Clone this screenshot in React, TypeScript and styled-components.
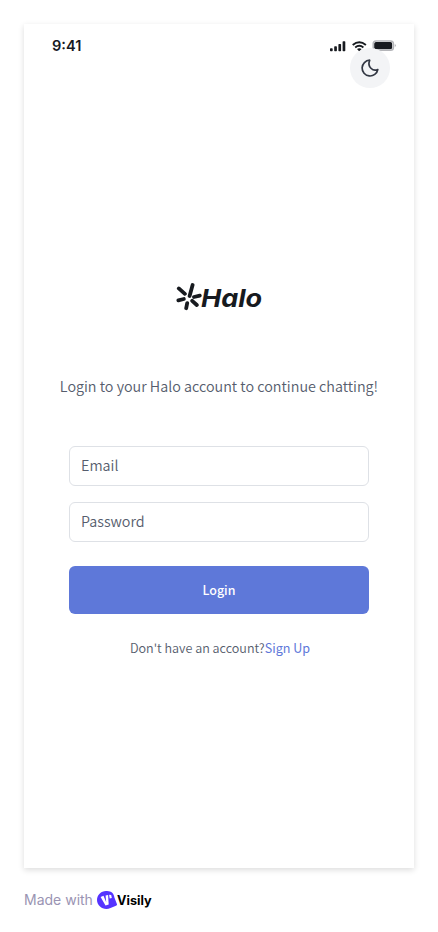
import React from "react";
import styled, { createGlobalStyle } from "styled-components";

const GlobalStyle = createGlobalStyle`
  * { box-sizing: border-box; }
  body { margin: 0; background: #fff; font-family: "Noto Sans CJK SC", "Noto Sans", sans-serif; }
`;

const Page = styled.div`
  width: 438px;
  height: 932px;
  padding: 24px 24px 0;
  overflow: hidden;
`;

const Screen = styled.main`
  display: flex;
  flex-direction: column;
  width: 390px;
  height: 844px;
  background: #fff;
  box-shadow: 0 2px 6px rgba(0, 0, 0, 0.14);
`;

const StatusBar = styled.div`
  display: flex;
  align-items: center;
  justify-content: space-between;
  height: 24px;
  padding: 20px 17px 0 28px;
`;

const Time = styled.span`
  font: 600 14.6px/20px Inter, sans-serif;
  color: #171a1f;
`;

const Indicators = styled.svg`
  display: block;
  width: 68px;
  height: 14px;
`;

const ThemeButton = styled.button`
  display: grid;
  place-items: center;
  align-self: flex-end;
  width: 40px;
  height: 40px;
  margin-right: 24px;
  padding: 0;
  border: 0;
  border-radius: 50%;
  background: #f3f4f6;
`;

const Brand = styled.div`
  display: flex;
  justify-content: center;
  height: 32px;
  margin-top: 192px;
`;

const BrandMark = styled.svg`
  display: block;
  width: 26px;
  height: 32px;
`;

const BrandName = styled.span`
  width: 61px;
  margin-left: -0.5px;
  font: italic 700 24.8px/36px Inter, sans-serif;
  color: #171a1f;
  white-space: nowrap;
  transform: scaleX(1.09);
  transform-origin: left;
`;

const Intro = styled.p`
  margin: 60px 0 0;
  font-size: 14.35px;
  font-weight: 350;
  line-height: 27px;
  color: #565d6d;
  text-align: center;
  white-space: nowrap;
`;

const Form = styled.form`
  display: flex;
  flex-direction: column;
  width: 300px;
  margin: 47px auto 0 45px;
`;

const Field = styled.input`
  height: 40px;
  margin-bottom: 16px;
  padding: 0 11px 3px;
  border: 1px solid #dee1e6;
  border-radius: 6px;
  background: #fff;
  font: 350 14.35px/26px "Noto Sans CJK SC", sans-serif;
  outline: none;
  &::placeholder { color: #565d6d; opacity: 1; }
`;

const Submit = styled.button`
  height: 48px;
  margin-top: 8px;
  border: 0;
  border-radius: 6px;
  background: #5e78d9;
  color: #fff;
  font: 500 12.44px/22px "Noto Sans CJK SC", sans-serif;
`;

const SignUp = styled.p`
  display: flex;
  justify-content: center;
  margin: 23px 0 0 2px;
  font-size: 12.58px;
  font-weight: 350;
  line-height: 22px;
  color: #565d6d;
`;

const SignUpLink = styled.a`
  color: #5e78d9;
  font-weight: 400;
`;

const Footer = styled.footer`
  display: flex;
  align-items: center;
  height: 20px;
  margin-top: 22px;
  font: 400 14px/20px Inter, sans-serif;
  color: #9a94b3;
`;

const MadeWith = styled.span`
  width: 72px;
  white-space: nowrap;
`;

const VisilyMark = styled.svg`
  display: block;
  width: 22px;
  height: 20px;
`;

const VisilyName = styled.span`
  margin-left: -1px;
  padding-top: 1px;
  font: 700 12.7px/20px Inter, sans-serif;
  color: #000;
`;

const StatusIcons = () => (
  <Indicators viewBox="0 0 68 14" aria-hidden="true">
    <g fill="#171a1f">
      <rect x="1" y="9.3" width="2.7" height="3" rx="0.7" />
      <rect x="5.2" y="7.3" width="2.7" height="5" rx="0.7" />
      <rect x="9.4" y="5" width="2.7" height="7.3" rx="0.7" />
      <rect x="13.6" y="2.2" width="2.7" height="10.1" rx="0.7" />
      <rect x="45.2" y="3" width="18" height="7.2" rx="1.8" />
    </g>
    <path d="M23.7 5.9Q30.3 .4 36.9 5.9M26.2 8.4Q30.3 5 34.4 8.4" fill="none" stroke="#171a1f" strokeWidth="1.9" />
    <path d="M28 10.1Q30.3 8.2 32.6 10.1L30.3 12.5Z" fill="#171a1f" />
    <rect x="44.2" y="1.9" width="20.2" height="9.4" rx="2.8" fill="none" stroke="#b4b5b9" strokeWidth="1.5" />
    <path d="M65.8 5.1Q67.8 6.6 65.8 8.1Z" fill="#a5a6a9" />
  </Indicators>
);

const App = () => (
  <>
    <GlobalStyle />
    <Page>
      <Screen>
        <StatusBar>
          <Time>9:41</Time>
          <StatusIcons />
        </StatusBar>
        <ThemeButton aria-label="Dark mode">
          <svg width="20" height="20" viewBox="0 0 20 20" fill="none" stroke="#323743" strokeWidth="1.7" strokeLinejoin="round">
            <path d="M9.7 2.2A7.9 7.9 0 1 0 17.8 11.5C13 13.8 7 9 9.7 2.2Z" />
          </svg>
        </ThemeButton>
        <Brand>
          <BrandMark viewBox="0 0 26 32" fill="none" stroke="#171a1f" strokeWidth="3.8" strokeLinecap="round">
            <path d="M16.6 5L13.6 16M2.8 8.4L8.9 13.8M2.4 20.4L7.8 19M11.2 23.2L10.2 28.2M16.2 20.8L20.8 25M18 17L23.8 15.6" />
          </BrandMark>
          <BrandName>Halo</BrandName>
        </Brand>
        <Intro>Login to your Halo account to continue chatting!</Intro>
        <Form>
          <Field type="email" placeholder="Email" />
          <Field type="password" placeholder="Password" />
          <Submit type="button">Login</Submit>
          <SignUp>
            Don't have an account?<SignUpLink>Sign Up</SignUpLink>
          </SignUp>
        </Form>
      </Screen>
      <Footer>
        <MadeWith>Made with</MadeWith>
        <VisilyMark viewBox="0 0 22 20" aria-hidden="true">
          <path d="M10 1C15 .5 18 3.5 18.4 7.4L21 14.2C21.2 15 20.8 15.5 20 15.7L14.5 18C8 21 1 16.2 1 10C1 5 5 1 10 1Z" fill="#5533ff" />
          <path d="M4.6 7L7.5 5.8L10.2 12.2L9.6 5.5L12.1 5.1L12.7 14.5L9.5 15.5Z" fill="#fff" />
          <path d="M13.1 4.7L15.2 4.9L15.8 8L13.7 8.6Z" fill="#fff" />
        </VisilyMark>
        <VisilyName>Visily</VisilyName>
      </Footer>
    </Page>
  </>
);

export default App;
